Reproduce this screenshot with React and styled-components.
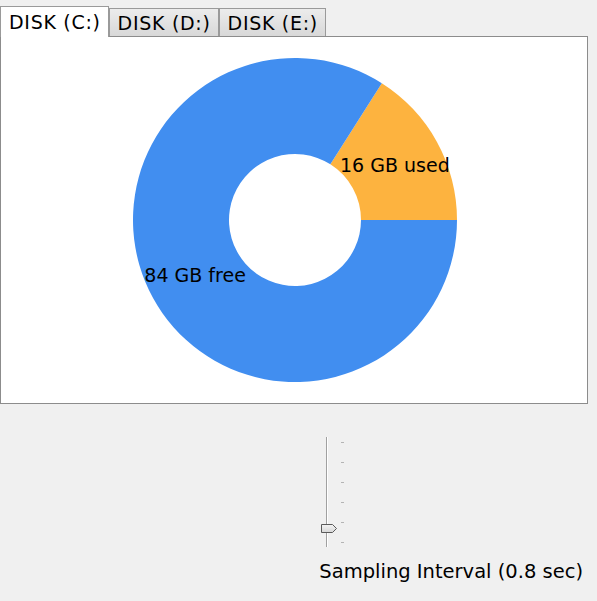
import React, { useState } from 'react';
import styled, { createGlobalStyle } from 'styled-components';

const GlobalStyle = createGlobalStyle`
  html, body {
    margin: 0;
    padding: 0;
    background: #f0f0f0;
  }
  body {
    font-family: "DejaVu Sans", Verdana, sans-serif;
    color: #000;
  }
`;

const Page = styled.div`
  width: 597px;
  height: 601px;
  box-sizing: border-box;
  padding: 6px 9px 0 0;
  display: flex;
  flex-direction: column;
`;

const TabBar = styled.div`
  display: flex;
  align-items: flex-end;
  height: 30px;
  position: relative;
  z-index: 1;
`;

const Tab = styled.button`
  font-family: inherit;
  font-size: 19px;
  letter-spacing: 0.7px;
  color: #000;
  margin: 0;
  box-sizing: border-box;
  border: 1px solid #9a9a9a;
  border-bottom: none;
  padding: 0 7px 0 8px;
  cursor: pointer;
  outline: none;
  white-space: nowrap;
  height: ${p => (p.$active ? '31px' : '28px')};
  margin-bottom: ${p => (p.$active ? '-1px' : '0')};
  background: ${p =>
    p.$active ? '#fff' : 'linear-gradient(#ececec, #d8d8d8)'};
  line-height: ${p => (p.$active ? '30px' : '28px')};
`;

const Panel = styled.div`
  height: 368px;
  box-sizing: border-box;
  border: 1px solid #8c8c8c;
  background: #fff;
  display: flex;
  align-items: center;
  justify-content: center;
`;

const Footer = styled.div`
  display: flex;
  justify-content: flex-end;
  padding-right: 5px;
`;

const SliderColumn = styled.div`
  display: flex;
  flex-direction: column;
  align-items: flex-start;
`;

const Slider = styled.div`
  margin-top: 33px;
  margin-left: 1px;
  display: flex;
  height: 110px;
`;

const TrackWrap = styled.div`
  position: relative;
  width: 21px;
  height: 100%;
`;

const Track = styled.div`
  position: absolute;
  left: 6px;
  top: 0;
  bottom: 0;
  width: 1px;
  background: #a0a0a0;
  border-right: 1px solid #fff;
`;

const Thumb = styled.svg`
  position: absolute;
  left: 0;
  top: ${p => p.$top}px;
`;

const Ticks = styled.div`
  display: flex;
  flex-direction: column;
  justify-content: space-between;
  padding: 5px 0 4px;
  box-sizing: border-box;
  height: 100%;
`;

const Tick = styled.span`
  display: block;
  width: 3px;
  height: 1px;
  background: #b4b4b4;
`;

const Caption = styled.div`
  margin-top: 14px;
  font-size: 19.5px;
  line-height: 22px;
  white-space: nowrap;
`;

const disks = {
  C: { used: 16, free: 84 },
  D: { used: 42, free: 58 },
  E: { used: 71, free: 29 },
};

function point(cx, cy, r, deg) {
  const a = (deg * Math.PI) / 180;
  return [cx + r * Math.cos(a), cy - r * Math.sin(a)];
}

function slicePath(cx, cy, r0, r1, a0, a1) {
  const large = a1 - a0 > 180 ? 1 : 0;
  const [x0, y0] = point(cx, cy, r1, a0);
  const [x1, y1] = point(cx, cy, r1, a1);
  const [x2, y2] = point(cx, cy, r0, a1);
  const [x3, y3] = point(cx, cy, r0, a0);
  return `M${x0} ${y0} A${r1} ${r1} 0 ${large} 0 ${x1} ${y1} L${x2} ${y2} A${r0} ${r0} 0 ${large} 1 ${x3} ${y3} Z`;
}

function DiskChart({ used, free }) {
  const cx = 294, cy = 183, r0 = 66, r1 = 162;
  const total = used + free;
  const usedDeg = (used / total) * 360;
  const slices = [
    { label: `${used} GB used`, from: 0, to: usedDeg, color: '#fdb33f' },
    { label: `${free} GB free`, from: usedDeg, to: 360, color: '#418ef0' },
  ];
  return (
    <svg width="586" height="366" viewBox="0 0 586 366">
      {slices.map(s => (
        <path key={s.label} d={slicePath(cx, cy, r0, r1, s.from, s.to)} fill={s.color} />
      ))}
      {slices.map(s => {
        const [x, y] = point(cx, cy, (r0 + r1) / 2, (s.from + s.to) / 2);
        return (
          <text
            key={s.label + 't'}
            x={x}
            y={y + 7}
            textAnchor="middle"
            fontFamily="DejaVu Sans, Verdana, sans-serif"
            fontSize="19"
            fill="#000"
          >
            {s.label}
          </text>
        );
      })}
    </svg>
  );
}

export default function App() {
  const [tab, setTab] = useState('C');
  return (
    <Page>
      <GlobalStyle />
      <TabBar>
        {Object.keys(disks).map(k => (
          <Tab key={k} $active={tab === k} onClick={() => setTab(k)}>
            DISK ({k}:)
          </Tab>
        ))}
      </TabBar>
      <Panel>
        <DiskChart {...disks[tab]} />
      </Panel>
      <Footer>
        <SliderColumn>
          <Slider>
            <TrackWrap>
              <Track />
              <Thumb $top={86} width="18" height="11" viewBox="0 0 18 11">
                <defs>
                  <linearGradient id="thumbFill" x1="0" y1="0" x2="0" y2="1">
                    <stop offset="0" stopColor="#f4f4f4" />
                    <stop offset="1" stopColor="#d6d6d6" />
                  </linearGradient>
                </defs>
                <path
                  d="M1.5 1.5 H12.5 L16.5 5.5 L12.5 9.5 H1.5 Z"
                  fill="url(#thumbFill)"
                  stroke="#5a5a5a"
                  strokeLinejoin="round"
                />
              </Thumb>
            </TrackWrap>
            <Ticks>
              {[0, 1, 2, 3, 4, 5].map(i => (
                <Tick key={i} />
              ))}
            </Ticks>
          </Slider>
          <Caption>Sampling Interval (0.8 sec)</Caption>
        </SliderColumn>
      </Footer>
    </Page>
  );
}
